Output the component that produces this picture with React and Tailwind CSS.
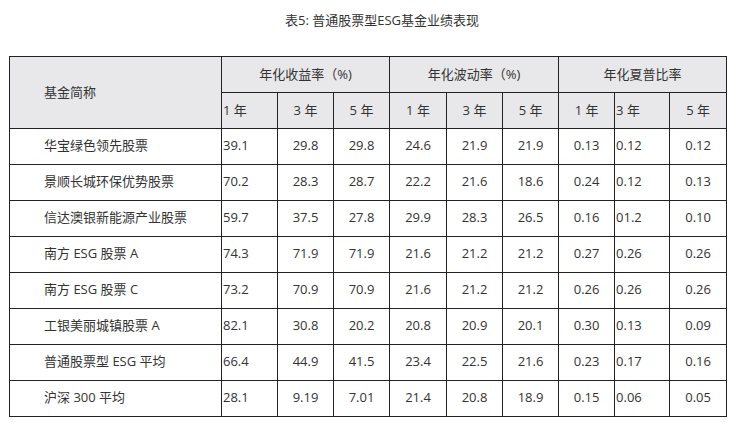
const rows = [
  ["华宝绿色领先股票", "39.1", "29.8", "29.8", "24.6", "21.9", "21.9", "0.13", "0.12", "0.12"],
  ["景顺长城环保优势股票", "70.2", "28.3", "28.7", "22.2", "21.6", "18.6", "0.24", "0.12", "0.13"],
  ["信达澳银新能源产业股票", "59.7", "37.5", "27.8", "29.9", "28.3", "26.5", "0.16", "01.2", "0.10"],
  ["南方 ESG 股票 A", "74.3", "71.9", "71.9", "21.6", "21.2", "21.2", "0.27", "0.26", "0.26"],
  ["南方 ESG 股票 C", "73.2", "70.9", "70.9", "21.6", "21.2", "21.2", "0.26", "0.26", "0.26"],
  ["工银美丽城镇股票 A", "82.1", "30.8", "20.2", "20.8", "20.9", "20.1", "0.30", "0.13", "0.09"],
  ["普通股票型 ESG 平均", "66.4", "44.9", "41.5", "23.4", "22.5", "21.6", "0.23", "0.17", "0.16"],
  ["沪深 300 平均", "28.1", "9.19", "7.01", "21.4", "20.8", "18.9", "0.15", "0.06", "0.05"],
];

// columns 1 and 8 (1年 收益率, 3年 夏普) are left aligned in the source
const leftCols = [1, 8];
const widths = ["w-[212px]", "w-[56px]", "w-[56px]", "w-[56px]", "w-[57px]", "w-[56px]", "w-[56px]", "w-[56px]", "w-[55px]", "w-[57px]"];

export default function App() {
  return (
    <div className="w-[734px] h-[423px] bg-white text-[#333] text-[13px] font-['Open_Sans','Noto_Sans_CJK_SC',sans-serif]">
      <div className="pt-[10px] pl-[285px] h-[56px] leading-[20px]">表5: 普通股票型ESG基金业绩表现</div>

      <table className="ml-[9px] w-[717px] table-fixed border-collapse">
        <colgroup>
          {widths.map((w, i) => (
            <col key={i} className={w} />
          ))}
        </colgroup>
        <thead className="bg-[#e8e8ea]">
          <tr className="h-[36px]">
            <th rowSpan={2} className="border border-[#222] text-left font-normal pl-[34px]">基金简称</th>
            <th colSpan={3} className="border border-[#222] font-normal">年化收益率（%)</th>
            <th colSpan={3} className="border border-[#222] font-normal">年化波动率（%)</th>
            <th colSpan={3} className="border border-[#222] font-normal">年化夏普比率</th>
          </tr>
          <tr className="h-[36px]">
            {[1, 3, 5, 1, 3, 5, 1, 3, 5].map((y, i) => (
              <th
                key={i}
                className={`border border-[#222] font-normal ${leftCols.includes(i + 1) ? "text-left pl-px" : "text-center"}`}
              >
                {y} 年
              </th>
            ))}
          </tr>
        </thead>
        <tbody>
          {rows.map((r) => (
            <tr key={r[0]} className="h-[36px]">
              {r.map((c, i) => (
                <td
                  key={i}
                  className={`border border-[#222] pb-[2px] ${
                    i === 0 ? "text-left pl-[34px]" : leftCols.includes(i) ? "text-left pl-px" : "text-center"
                  }`}
                >
                  {c}
                </td>
              ))}
            </tr>
          ))}
        </tbody>
      </table>
    </div>
  );
}
